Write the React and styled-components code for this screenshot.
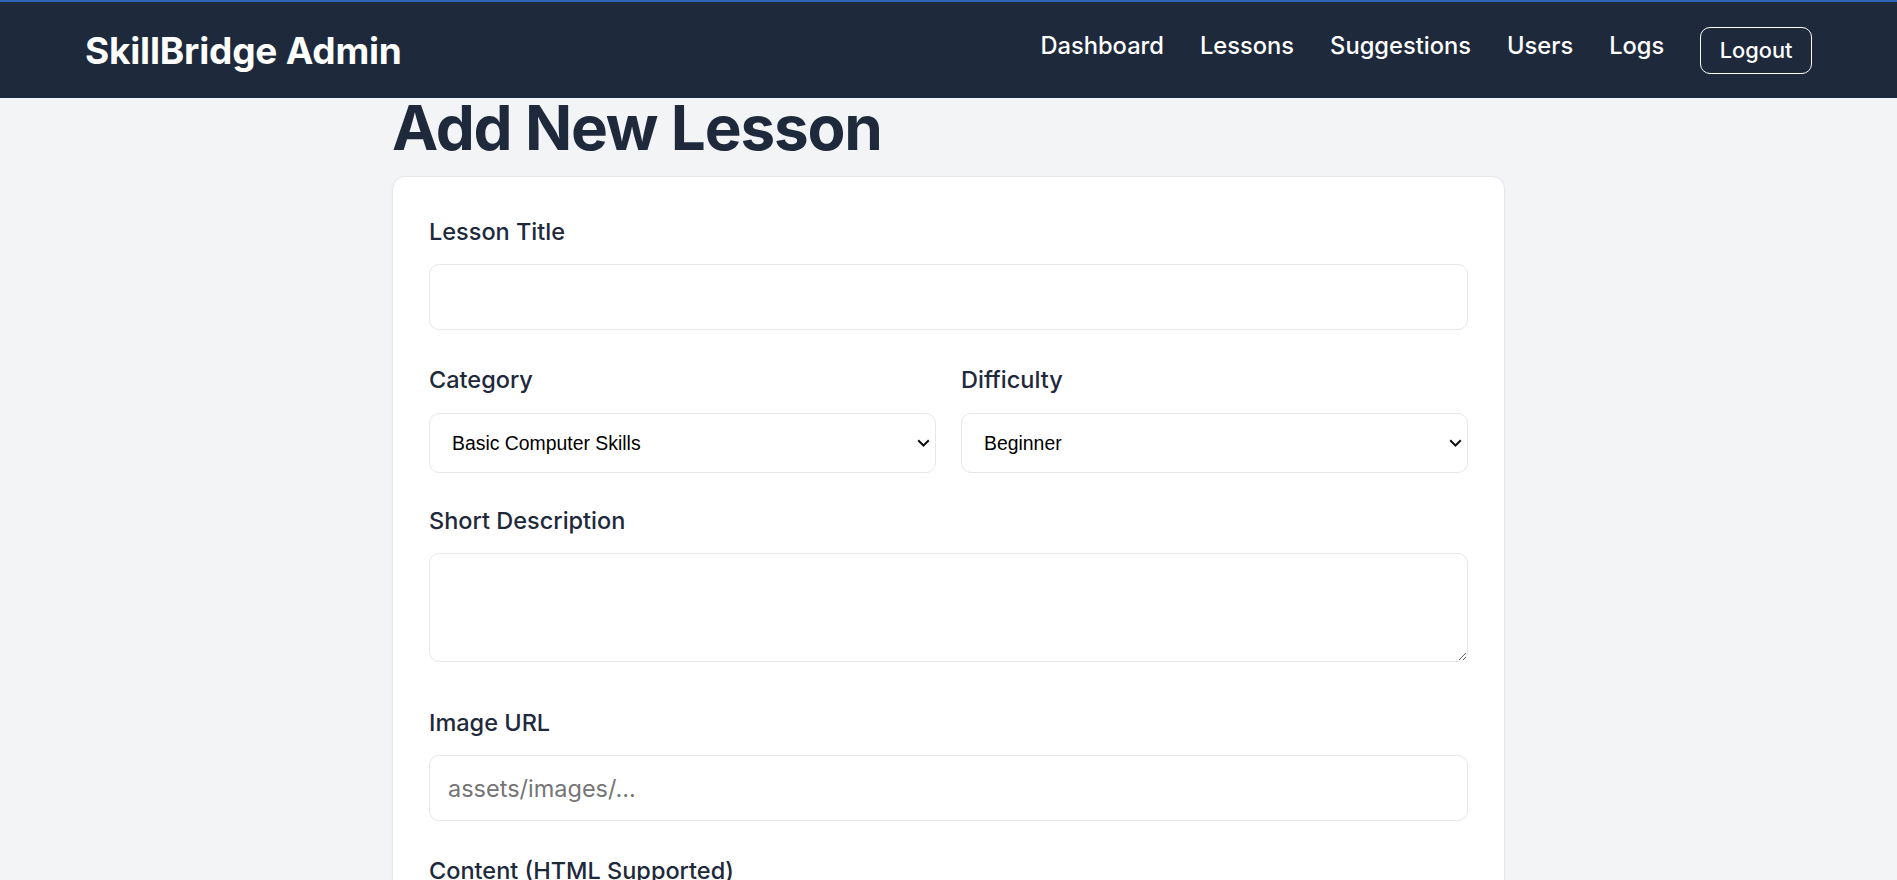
import React from "react";
import styled, { createGlobalStyle } from "styled-components";

const GlobalStyle = createGlobalStyle`
  html {
    scrollbar-width: none;
  }
  html::-webkit-scrollbar {
    display: none;
  }
  body {
    margin: 0;
    background: #f3f4f6;
    font-family: Inter, "Noto Sans", sans-serif;
    color: #1e293b;
  }
  * {
    box-sizing: border-box;
  }
`;

const Header = styled.header`
  height: 98px;
  background: #1e293b;
  border-top: 2px solid #2f67b8;
  display: flex;
  align-items: center;
  justify-content: space-between;
  padding: 0 85px;
`;

const Brand = styled.div`
  font-size: 37px;
  font-weight: 700;
  color: #ffffff;
  letter-spacing: -0.2px;
`;

const Nav = styled.nav`
  display: flex;
  align-items: center;
  gap: 36px;
`;

const NavLink = styled.a`
  color: #ffffff;
  text-decoration: none;
  font-size: 23.7px;
  font-weight: 500;
  margin-bottom: 10px;
  cursor: pointer;
`;

const LogoutButton = styled.button`
  background: transparent;
  border: 1px solid #ffffff;
  border-radius: 10px;
  color: #ffffff;
  font-family: Inter, "Noto Sans", sans-serif;
  font-size: 21.8px;
  font-weight: 500;
  padding: 9.5px 18.5px;
  cursor: pointer;
`;

const Main = styled.main`
  width: 1113px;
  margin: 0 auto;
  padding-bottom: 40px;
`;

const PageTitle = styled.h1`
  margin: -1px 0 17px;
  font-size: 62px;
  line-height: 1;
  font-weight: 700;
  letter-spacing: -1.2px;
  color: #1e293b;
`;

const Card = styled.div`
  background: #ffffff;
  border: 1px solid #e5e7eb;
  border-radius: 13px;
  box-shadow: 0 1px 3px rgba(15, 23, 42, 0.04);
  padding: 37px 36px;
`;

const Group = styled.div`
  margin-bottom: ${(p) => p.$space || 32}px;
`;

const Row = styled.div`
  display: grid;
  grid-template-columns: 1fr 1fr;
  gap: 25px;
  margin-bottom: 30px;
`;

const Label = styled.label`
  display: block;
  font-size: 23.5px;
  font-weight: 500;
  line-height: 1.5;
  color: #1e293b;
  margin-bottom: 15px;
`;

const TextInput = styled.input`
  display: block;
  width: 100%;
  height: 66px;
  padding: 0 18px;
  border: 1px solid #e5e7eb;
  border-radius: 10px;
  background: #ffffff;
  font-family: Inter, "Noto Sans", sans-serif;
  font-size: 23.5px;
  color: #1e293b;
  outline: none;

  &::placeholder {
    color: #757575;
  }
`;

const SelectWrap = styled.div`
  position: relative;
`;

const Select = styled.select`
  display: block;
  width: 100%;
  height: 60px;
  padding: 0 40px 0 22px;
  border: 1px solid #e5e7eb;
  border-radius: 10px;
  background: #ffffff;
  appearance: none;
  -webkit-appearance: none;
  font-family: "Liberation Sans", Arial, sans-serif;
  font-size: 19.4px;
  color: #000000;
  outline: none;
`;

const Chevron = styled.svg`
  position: absolute;
  right: 6px;
  top: 50%;
  width: 13px;
  height: 8px;
  margin-top: -4px;
  pointer-events: none;
`;

const TextArea = styled.textarea`
  display: block;
  width: 100%;
  height: ${(p) => p.$height}px;
  padding: 18px;
  border: 1px solid #e5e7eb;
  border-radius: 10px;
  background: #ffffff;
  font-family: Inter, "Noto Sans", sans-serif;
  font-size: 23.5px;
  color: #1e293b;
  outline: none;
`;

const SubmitButton = styled.button`
  background: #1e293b;
  color: #ffffff;
  border: none;
  border-radius: 10px;
  padding: 16px 28px;
  font-family: Inter, "Noto Sans", sans-serif;
  font-size: 21.8px;
  font-weight: 600;
  cursor: pointer;
`;

const navItems = ["Dashboard", "Lessons", "Suggestions", "Users", "Logs"];

const Dropdown = ({ id, value, options }) => (
  <SelectWrap>
    <Select id={id} defaultValue={value}>
      {options.map((o) => (
        <option key={o.value} value={o.value}>
          {o.label}
        </option>
      ))}
    </Select>
    <Chevron viewBox="0 0 13 8" fill="none">
      <path d="M1.2 1.2 L6.5 6.5 L11.8 1.2" stroke="#111" strokeWidth="2" />
    </Chevron>
  </SelectWrap>
);

export default function App() {
  return (
    <>
      <GlobalStyle />
      <Header>
        <Brand>SkillBridge Admin</Brand>
        <Nav>
          {navItems.map((item) => (
            <NavLink key={item}>{item}</NavLink>
          ))}
          <LogoutButton>Logout</LogoutButton>
        </Nav>
      </Header>

      <Main>
        <PageTitle>Add New Lesson</PageTitle>
        <Card>
          <form onSubmit={(e) => e.preventDefault()}>
            <Group>
              <Label htmlFor="title">Lesson Title</Label>
              <TextInput id="title" type="text" />
            </Group>

            <Row>
              <div>
                <Label htmlFor="category">Category</Label>
                <Dropdown
                  id="category"
                  value="basic"
                  options={[
                    { value: "basic", label: "Basic Computer Skills" },
                    { value: "internet", label: "Internet Safety" },
                    { value: "office", label: "Office Tools" },
                  ]}
                />
              </div>
              <div>
                <Label htmlFor="difficulty">Difficulty</Label>
                <Dropdown
                  id="difficulty"
                  value="beginner"
                  options={[
                    { value: "beginner", label: "Beginner" },
                    { value: "intermediate", label: "Intermediate" },
                    { value: "advanced", label: "Advanced" },
                  ]}
                />
              </div>
            </Row>

            <Group $space={43}>
              <Label htmlFor="desc">Short Description</Label>
              <TextArea id="desc" $height={109} />
            </Group>

            <Group>
              <Label htmlFor="image">Image URL</Label>
              <TextInput id="image" type="text" placeholder="assets/images/..." />
            </Group>

            <Group>
              <Label htmlFor="content">Content (HTML Supported)</Label>
              <TextArea id="content" $height={240} />
            </Group>

            <SubmitButton type="submit">Save Lesson</SubmitButton>
          </form>
        </Card>
      </Main>
    </>
  );
}
